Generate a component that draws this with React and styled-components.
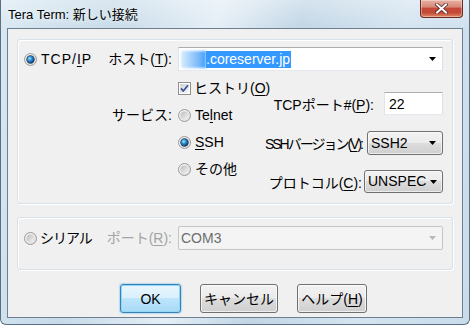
import React from 'react';
import styled, { createGlobalStyle } from 'styled-components';

const Global = createGlobalStyle`
  html, body { margin: 0; padding: 0; width: 470px; height: 325px; overflow: hidden; background: #fff; }
  body { font-family: "Liberation Sans", "Noto Sans CJK JP", sans-serif; font-size: 14px; color: #000; }
`;

const Window = styled.div`
  width: 470px;
  height: 325px;
  box-sizing: border-box;
  display: flex;
  flex-direction: column;
  padding: 0 6px 6px;
  border: 1px solid #5a6f84;
  border-top: none;
  border-radius: 0 0 6px 6px;
  background:
    linear-gradient(180deg, rgba(255,255,255,0.35) 0%, rgba(255,255,255,0) 30px),
    linear-gradient(100deg, #d9e8f2 0%, #c6dae8 22%, #e4eef6 42%, #c0d5e5 58%, #d4e4f0 78%, #c9dcea 100%);
`;

const TitleBar = styled.div`
  height: 28px;
  display: flex;
  align-items: flex-start;
  justify-content: space-between;
`;

const Title = styled.div`
  font-family: "Liberation Sans", "Noto Sans CJK JP", sans-serif;
  font-size: 13px;
  line-height: 16px;
  padding: 7px 0 0 1px;
  color: #000;
  text-shadow: 0 0 6px rgba(255,255,255,0.9);
`;

const CloseButton = styled.div`
  width: 41px;
  height: 17px;
  border: 1px solid #6a2a20;
  border-top: none;
  border-radius: 0 0 4px 4px;
  background: linear-gradient(180deg, #e8b1a4 0%, #d88a78 40%, #c5493a 50%, #c44a36 75%, #dd8a66 100%);
  box-shadow: inset 0 0 0 1px rgba(255,255,255,0.35);
  display: flex;
  align-items: center;
  justify-content: center;
`;

const Client = styled.div`
  flex: 1;
  border: 1px solid #6d7f91;
  background: #f0f0f0;
  padding: 10px 9px 0;
  display: flex;
  flex-direction: column;
`;

const Group = styled.div`
  border: 1px solid #d8e1e7;
  border-radius: 3px;
  box-shadow: inset 1px 1px 0 #fff, 1px 1px 0 #fff;
  padding: ${p => p.$pt}px 9px 10px 6px;
  margin-top: ${p => p.$mt || 0}px;
  display: grid;
  grid-template-columns: 81px 73px 265px;
  grid-template-rows: 24px auto;
  row-gap: 9px;
`;

const RadioItem = styled.div`
  display: flex;
  align-items: center;
  gap: ${p => p.$gap ?? 4}px;
  height: 16px;
  line-height: 16px;
  white-space: nowrap;
  align-self: center;
  & > svg { flex-shrink: 0; }
`;

const OptionItem = styled.div`
  display: flex;
  align-items: center;
  gap: ${p => p.$gap ?? 4}px;
  height: 16px;
  line-height: 16px;
  white-space: nowrap;
  & > svg { flex-shrink: 0; }
`;

const FieldLabel = styled.div`
  text-align: right;
  padding-right: 6px;
  line-height: 16px;
  white-space: nowrap;
  align-self: ${p => (p.$top ? 'start' : 'center')};
  padding-top: ${p => p.$pt || 0}px;
  color: ${p => (p.$disabled ? '#a3a3a3' : '#000')};
`;

const Wide = styled.span`
  letter-spacing: 1px;
`;

const Tight = styled.span`
  letter-spacing: ${p => p.$ls}px;
`;

const U = styled.span`
  text-decoration: underline;
  text-underline-offset: 2px;
`;

const Combo = styled.div`
  height: 24px;
  box-sizing: border-box;
  border: 1px solid;
  border-color: ${p => (p.$disabled ? '#c2c6c9' : '#abadb3 #dbdfe6 #e3e9ef #e2e3ea')};
  border-radius: ${p => (p.$disabled ? '2px' : '0')};
  background: ${p => (p.$disabled ? '#f4f4f4' : '#fff')};
  color: ${p => (p.$disabled ? '#6d6d6d' : '#000')};
  display: flex;
  align-items: center;
  padding: 0 0 0 2px;
`;

const ComboText = styled.div`
  flex: 1;
  display: flex;
  align-items: center;
  line-height: 17px;
`;

const Blur = styled.span`
  display: inline-block;
  width: 25px;
  height: 17px;
  background: linear-gradient(90deg, #d9ecfd 0%, #a9d3fc 35%, #72b6fa 75%, #3d9bff 100%);
  filter: blur(1px);
`;

const Selected = styled.span`
  background: #3399ff;
  color: #fff;
  height: 17px;
  line-height: 17px;
  padding-right: 1px;
`;

const ArrowBox = styled.div`
  width: 17px;
  display: flex;
  justify-content: center;
  align-items: center;
  padding-right: 1px;
`;

const ServiceBlock = styled.div`
  display: flex;
  min-width: 0;
`;

const OptionList = styled.div`
  width: 84px;
  flex-shrink: 0;
  display: flex;
  flex-direction: column;
  gap: 11px;
`;

const SideCol = styled.div`
  flex: 1;
  min-width: 0;
  display: flex;
  flex-direction: column;
  padding-top: 12px;
`;

const SideRow = styled.div`
  display: flex;
  justify-content: flex-end;
  align-items: center;
  gap: ${p => p.$gap || 5}px;
  margin-top: ${p => p.$mt || 0}px;
  white-space: nowrap;
`;

const TextInput = styled.div`
  width: ${p => p.$w}px;
  flex-shrink: 0;
  height: 23px;
  box-sizing: border-box;
  border: 1px solid;
  border-color: #abadb3 #dbdfe6 #e3e9ef #e2e3ea;
  background: #fff;
  padding: 0 4px;
  display: flex;
  align-items: center;
`;

const DropButton = styled.div`
  width: ${p => p.$w}px;
  flex-shrink: 0;
  height: ${p => p.$h}px;
  box-sizing: border-box;
  border: 1px solid #707070;
  border-radius: 3px;
  background: linear-gradient(180deg, #f2f2f2 0%, #ebebeb 49%, #dddddd 50%, #cfcfcf 100%);
  box-shadow: inset 0 0 0 1px rgba(255,255,255,0.6);
  display: flex;
  align-items: center;
  padding-left: 3px;
`;

const ButtonRow = styled.div`
  display: flex;
  gap: 19px;
  margin-top: 14px;
  padding-left: 103px;
`;

const Button = styled.div`
  width: ${p => p.$w}px;
  height: 29px;
  box-sizing: border-box;
  border: 1px solid ${p => (p.$primary ? '#3c7fb1' : '#707070')};
  border-radius: 3px;
  background: ${p =>
    p.$primary
      ? 'linear-gradient(180deg, #e8f6fd 0%, #d9f0fc 49%, #bee6fd 50%, #a7d9f5 100%)'
      : 'linear-gradient(180deg, #f2f2f2 0%, #ebebeb 49%, #dddddd 50%, #cfcfcf 100%)'};
  box-shadow: ${p =>
    p.$primary ? 'inset 0 0 0 1px #8fd8f8, 0 0 1px 1px rgba(120,200,240,0.5)' : 'inset 0 0 0 1px rgba(255,255,255,0.65)'};
  display: flex;
  align-items: center;
  justify-content: center;
  line-height: 16px;
  white-space: nowrap;
`;

const RadioIcon = ({ checked }) => (
  <svg width="13" height="13" viewBox="0 0 13 13">
    <defs>
      <linearGradient id="rdOuter" x1="0" y1="0" x2="1" y2="1">
        <stop offset="0" stopColor="#f6f6f6" />
        <stop offset="1" stopColor="#dcdcdc" />
      </linearGradient>
      <linearGradient id="rdInner" x1="0" y1="0" x2="1" y2="1">
        <stop offset="0" stopColor="#bdbdbd" />
        <stop offset="1" stopColor="#f4f4f4" />
      </linearGradient>
      <radialGradient id="rdDot" cx="0.38" cy="0.35" r="0.7">
        <stop offset="0" stopColor="#a6e6ff" />
        <stop offset="0.45" stopColor="#2f92d6" />
        <stop offset="1" stopColor="#0c3f7a" />
      </radialGradient>
    </defs>
    <circle cx="6.5" cy="6.5" r="6" fill="url(#rdOuter)" stroke="#9a9a9a" strokeWidth="1" />
    {checked ? (
      <>
        <circle cx="6.5" cy="6.5" r="4.2" fill="#2d4257" />
        <circle cx="6.5" cy="6.5" r="3.4" fill="url(#rdDot)" />
      </>
    ) : (
      <circle cx="6.5" cy="6.5" r="4" fill="url(#rdInner)" />
    )}
  </svg>
);

const CheckIcon = () => (
  <svg width="13" height="13" viewBox="0 0 13 13">
    <defs>
      <linearGradient id="cbInner" x1="0" y1="0" x2="1" y2="1">
        <stop offset="0" stopColor="#cdd1d6" />
        <stop offset="1" stopColor="#f7f7f7" />
      </linearGradient>
    </defs>
    <rect x="0.5" y="0.5" width="12" height="12" fill="#fff" stroke="#8f8f8f" />
    <rect x="2" y="2" width="9" height="9" fill="url(#cbInner)" />
    <path d="M3 6.3 L5.3 9 L10 3.2" fill="none" stroke="#3b5596" strokeWidth="1.8" strokeLinejoin="round" />
  </svg>
);

const Arrow = ({ color = '#000' }) => (
  <svg width="7" height="4" viewBox="0 0 7 4">
    <polygon points="0,0 7,0 3.5,4" fill={color} />
  </svg>
);

const CloseX = () => (
  <svg width="13" height="11" viewBox="0 0 13 11">
    <path d="M2 1.5 L11 9.5 M11 1.5 L2 9.5" stroke="#5a2a24" strokeWidth="3.6" strokeLinecap="square" />
    <path d="M2 1.5 L11 9.5 M11 1.5 L2 9.5" stroke="#fff" strokeWidth="2" strokeLinecap="square" />
  </svg>
);

export default function App() {
  return (
    <>
      <Global />
      <Window>
        <TitleBar>
          <Title>Tera Term: 新しい接続</Title>
          <CloseButton>
            <CloseX />
          </CloseButton>
        </TitleBar>
        <Client>
          <Group $pt={7}>
            <RadioItem>
              <RadioIcon checked />
              <Wide>TCP/<U>I</U>P</Wide>
            </RadioItem>
            <FieldLabel>ホスト(<U>T</U>):</FieldLabel>
            <Combo>
              <ComboText>
                <Blur />
                <Selected>.coreserver.jp</Selected>
              </ComboText>
              <ArrowBox>
                <Arrow />
              </ArrowBox>
            </Combo>
            <div />
            <FieldLabel $top $pt={27}>サービス:</FieldLabel>
            <ServiceBlock>
              <OptionList>
                <OptionItem $gap={3}>
                  <CheckIcon />
                  <span>ヒストリ(<U>O</U>)</span>
                </OptionItem>
                <OptionItem>
                  <RadioIcon />
                  <span>Te<U>l</U>net</span>
                </OptionItem>
                <OptionItem>
                  <RadioIcon checked />
                  <span><U>S</U>SH</span>
                </OptionItem>
                <OptionItem>
                  <RadioIcon />
                  <span>その他</span>
                </OptionItem>
              </OptionList>
              <SideCol>
                <SideRow $gap={10}>
                  <span>TCPポート#(<U>P</U>):</span>
                  <TextInput $w={59}>22</TextInput>
                </SideRow>
                <SideRow $mt={16}>
                  <Tight $ls={-2}>SSHバージョン(<U>V</U>):</Tight>
                  <DropButton $w={76} $h={24}>
                    <ComboText>SSH2</ComboText>
                    <ArrowBox>
                      <Arrow />
                    </ArrowBox>
                  </DropButton>
                </SideRow>
                <SideRow $mt={15} $gap={2}>
                  <span>プロトコル(<U>C</U>):</span>
                  <DropButton $w={79} $h={23}>
                    <ComboText>UNSPEC</ComboText>
                    <ArrowBox>
                      <Arrow />
                    </ArrowBox>
                  </DropButton>
                </SideRow>
              </SideCol>
            </ServiceBlock>
          </Group>
          <Group $pt={8} $mt={13}>
            <RadioItem $gap={3}>
              <RadioIcon />
              <Tight $ls={-1}>シリアル</Tight>
            </RadioItem>
            <FieldLabel $disabled>ポート(<U>R</U>):</FieldLabel>
            <Combo $disabled>
              <ComboText>COM3</ComboText>
              <ArrowBox>
                <Arrow color="#b8b8b8" />
              </ArrowBox>
            </Combo>
          </Group>
          <ButtonRow>
            <Button $w={61} $primary>OK</Button>
            <Button $w={78}>キャンセル</Button>
            <Button $w={70}>ヘルプ(<U>H</U>)</Button>
          </ButtonRow>
        </Client>
      </Window>
    </>
  );
}
